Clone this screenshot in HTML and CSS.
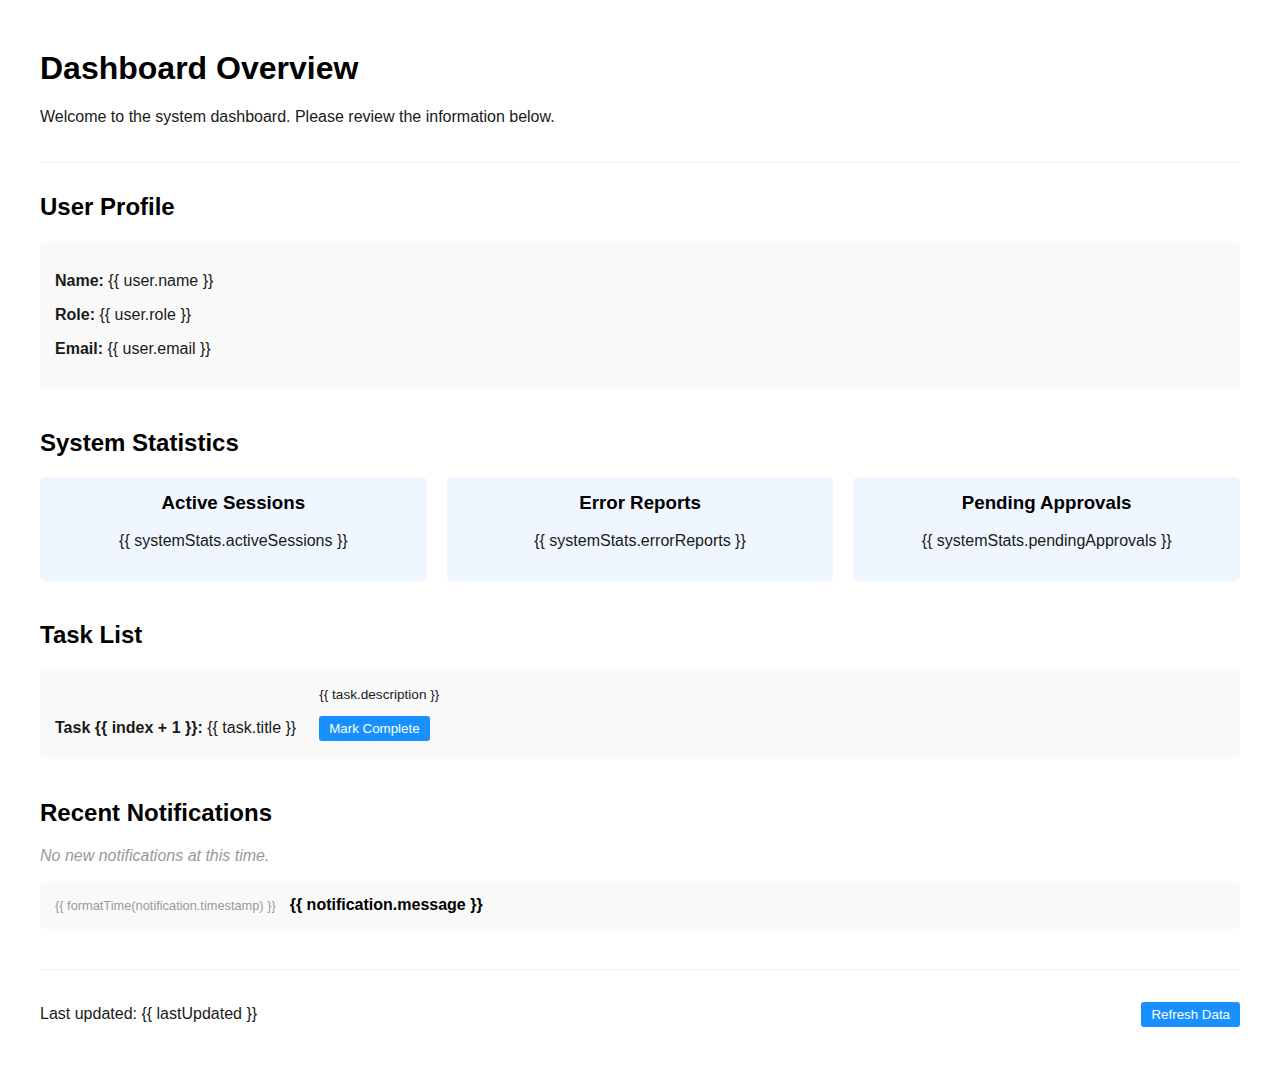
FILE: index.html
```html
<!DOCTYPE html>
<html lang="en">
<head>
<meta charset="utf-8">
<title>Dashboard Overview</title>
<link rel="stylesheet" href="styles.css">
</head>
<body>
<div class="container">
  <header class="page-header">
    <h1>Dashboard Overview</h1>
    <p>Welcome to the system dashboard. Please review the information below.</p>
  </header>

  <section class="section">
    <h2>User Profile</h2>
    <div class="panel profile">
      <p><strong>Name:</strong> {{ user.name }}</p>
      <p><strong>Role:</strong> {{ user.role }}</p>
      <p><strong>Email:</strong> {{ user.email }}</p>
    </div>
  </section>

  <section class="section">
    <h2>System Statistics</h2>
    <div class="stats">
      <div class="stat-card">
        <h3>Active Sessions</h3>
        <p>{{ systemStats.activeSessions }}</p>
      </div>
      <div class="stat-card">
        <h3>Error Reports</h3>
        <p>{{ systemStats.errorReports }}</p>
      </div>
      <div class="stat-card">
        <h3>Pending Approvals</h3>
        <p>{{ systemStats.pendingApprovals }}</p>
      </div>
    </div>
  </section>

  <section class="section">
    <h2>Task List</h2>
    <ul class="panel task-list">
      <li class="task"><strong>Task {{ index + 1 }}:</strong> {{ task.title }}<div class="task-actions"><p class="task-desc">{{ task.description }}</p><button class="btn">Mark Complete</button></div></li>
    </ul>
  </section>

  <section class="section">
    <h2>Recent Notifications</h2>
    <p class="empty">No new notifications at this time.</p>
    <div class="panel notification">
      <span class="timestamp">{{ formatTime(notification.timestamp) }}</span>
      <strong class="message">{{ notification.message }}</strong>
    </div>
  </section>

  <footer class="page-footer">
    <p>Last updated: {{ lastUpdated }}</p>
    <button class="btn">Refresh Data</button>
  </footer>
</div>
</body>
</html>
```

FILE: styles.css
```css
html, body {
  margin: 0;
  padding: 0;
  background: #ffffff;
}

body {
  font-family: "Liberation Sans", Arial, sans-serif;
  font-size: 16px;
  color: #1a1a1a;
}

.container {
  max-width: 1200px;
  margin: 0 auto;
  padding: 40px 40px 28px;
}

.page-header {
  padding-bottom: 20px;
  border-bottom: 1px solid #eeeeee;
  margin-bottom: 30px;
}

h1 {
  font-size: 32px;
  margin: 10px 0 21.44px;
  color: #000;
}

.page-header p {
  margin: 0 0 16px;
}

h2 {
  font-size: 24px;
  margin: 0 0 20px;
  color: #000;
}

.section {
  margin-bottom: 40px;
}

.panel {
  background: #f9f9f9;
  border-radius: 5px;
  padding: 15px;
}

.profile p {
  margin: 16px 0;
}

.stats {
  display: grid;
  grid-template-columns: repeat(3, 1fr);
  gap: 20px;
}

.stat-card {
  background: #eff6ff;
  border-radius: 5px;
  padding: 15px;
  text-align: center;
}

.stat-card h3 {
  font-size: 18.72px;
  margin: 0 0 17.7px;
  color: #000;
}

.stat-card p {
  margin: 0 0 16px;
}

.task-list {
  list-style: none;
  margin: 0;
  padding: 18px 15px 18px;
}

.task {
  margin: 0;
}

.task-actions {
  display: inline-block;
  margin-left: 23px;
}

.task-desc {
  font-size: 13.6px;
  margin: 0 0 14px;
}

.btn {
  font-family: "Liberation Sans", Arial, sans-serif;
  font-size: 13.333px;
  background: #1890ff;
  color: #ffffff;
  border: none;
  border-radius: 3px;
  padding: 5px 10px;
  line-height: normal;
  cursor: pointer;
}

.empty {
  color: #999999;
  font-style: italic;
  margin: 0 0 16px;
}

.notification {
  display: flex;
  align-items: center;
}

.timestamp {
  font-size: 12.8px;
  color: #999999;
  margin-right: 14px;
}

.message {
  color: #000;
}

.page-footer {
  border-top: 1px solid #eeeeee;
  padding-top: 19px;
  display: flex;
  justify-content: space-between;
  align-items: center;
}

.page-footer p {
  margin: 16px 0;
}
```
